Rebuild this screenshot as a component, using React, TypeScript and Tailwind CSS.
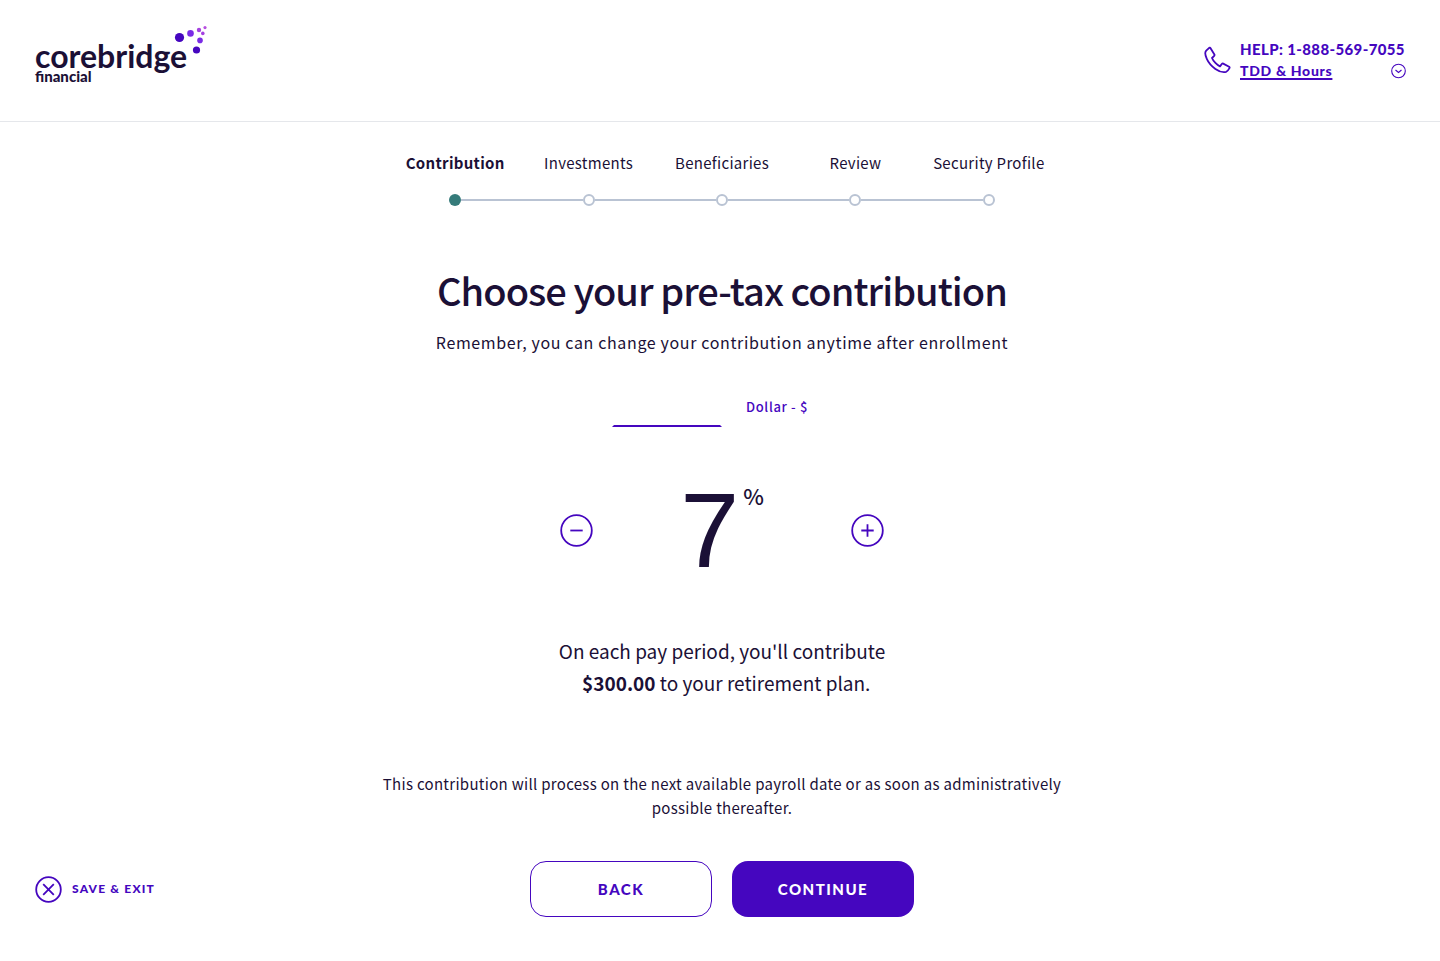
import { useState } from 'react'

const steps = ['Contribution', 'Investments', 'Beneficiaries', 'Review', 'Security Profile']

const Logo = () => (
  <a href="#" aria-label="corebridge financial" className="relative block pt-3.5 font-['Lato'] text-[#1b1036]">
    <span className="block text-[32px] leading-7 font-bold">corebridge</span>
    <span className="block text-[15px] leading-3 font-black">financial</span>
    <svg className="absolute -top-1.5 left-[139px] h-8 w-9" viewBox="0 0 36 32" aria-hidden="true">
      <circle cx="5.5" cy="15.5" r="4.6" fill="#4506bf" />
      <circle cx="16.5" cy="11.4" r="3.3" fill="#7a2be6" />
      <circle cx="25" cy="8" r="2.2" fill="#a441e0" />
      <circle cx="31" cy="5.6" r="1.6" fill="#b84fe0" />
      <circle cx="28.8" cy="11.4" r="1.8" fill="#a441e0" />
      <circle cx="26" cy="18.4" r="2.8" fill="#7a2be6" />
      <circle cx="22.5" cy="28" r="3.6" fill="#4506bf" />
    </svg>
  </a>
)

const PhoneIcon = () => (
  <svg className="h-7 w-7" viewBox="0 0 28 28" fill="none" stroke="currentColor" strokeWidth="1.8" strokeLinejoin="round" aria-hidden="true">
    <path d="M5.2 1.8 2.2 4.6C.9 6 1.1 9.2 2.8 12.8 4.4 16.4 7.4 20 11.4 22.9 15.2 25.6 19.6 26.5 22.1 25.9 23.1 25.6 24.4 24 25.5 22.1 25.8 21.6 25.6 21.2 25.1 20.8L19.2 17.6C18.8 17.4 18.3 17.4 18 17.8L16 20.4C13.2 19.2 9.2 15.2 8 12L10.2 9.8C10.6 9.4 10.6 8.9 10.4 8.4L6.4 2.1C6.1 1.6 5.6 1.5 5.2 1.8Z" />
  </svg>
)

const Header = () => (
  <header className="flex h-[122px] items-start justify-between border-b border-gray-200 pt-7 pr-[34px] pl-[35px]">
    <Logo />
    <div className="flex items-center gap-2 pt-2.5 font-['Lato'] text-[14px] leading-[22px] font-black text-[#4506bf]">
      <PhoneIcon />
      <div className="w-[166px]">
        <a href="tel:18885697055" className="block text-[15px] tracking-wide whitespace-nowrap">HELP: 1-888-569-7055</a>
        <button type="button" className="flex w-full items-center justify-between">
          <span className="tracking-wider underline decoration-2 underline-offset-2">TDD &amp; Hours</span>
          <svg className="h-4 w-4" viewBox="0 0 16 16" fill="none" stroke="currentColor" aria-hidden="true">
            <circle cx="8.5" cy="8" r="6.8" strokeWidth="1.1" />
            <path d="M5.5 7l3 2.4 3-2.4" strokeWidth="1.2" />
          </svg>
        </button>
      </div>
    </div>
  </header>
)

const Progress = () => (
  <ol className="flex w-full max-w-[667px] text-[15px] leading-6 tracking-[0.02em]">
    {steps.map((step, index) => (
      <li key={step} aria-current={index === 0 ? 'step' : undefined} className="flex-1 text-center">
        <span className={index === 0 ? 'font-bold whitespace-nowrap' : 'whitespace-nowrap'}>{step}</span>
        <div className="mt-[19px] flex items-center">
          <span className={index === 0 ? 'h-0.5 flex-1' : 'h-0.5 flex-1 bg-[#b9c3d3]'} />
          <span
            className={
              index === 0
                ? 'h-3 w-3 rounded-full bg-[#357b7a]'
                : 'h-3 w-3 rounded-full border-2 border-[#b9c3d3] bg-white'
            }
          />
          <span className={index === steps.length - 1 ? 'h-0.5 flex-1' : 'h-0.5 flex-1 bg-[#b9c3d3]'} />
        </div>
      </li>
    ))}
  </ol>
)

const App = () => {
  const [percent, setPercent] = useState(7)

  return (
    <div className="bg-white font-['Noto_Sans_CJK_SC',sans-serif] text-[#1b1036]">
      <Header />

      <main className="flex flex-col items-center pt-[29px] pr-8 pl-9 text-center">
        <Progress />

        <h1 className="mt-[60px] text-[38px] leading-12 font-medium tracking-tight">Choose your pre-tax contribution</h1>
        <p className="mt-4 text-[16px] leading-6 tracking-[0.04em]">
          Remember, you can change your contribution anytime after enrollment
        </p>

        <div role="tablist" className="mt-[33px] flex text-[13px] font-medium tracking-wider text-[#4506bf]">
          <button
            type="button"
            role="tab"
            aria-selected="true"
            aria-label="Percent"
            className="flex h-10 w-[110px] items-end"
          >
            <svg className="h-0.5 w-full" viewBox="0 0 110 2" preserveAspectRatio="none" aria-hidden="true">
              <path d="M2 0h106l2 2H0z" fill="currentColor" />
            </svg>
          </button>
          <button type="button" role="tab" aria-selected="false" className="h-10 w-[110px]">
            Dollar - $
          </button>
        </div>

        <div className="mt-12 flex w-[324px] items-center justify-between">
          <button
            type="button"
            aria-label="Decrease contribution"
            onClick={() => setPercent(Math.max(0, percent - 1))}
            className="text-[#4506bf]"
          >
            <svg className="h-[33px] w-[33px]" viewBox="0 0 33 33" fill="none" stroke="currentColor" strokeWidth="1.8" aria-hidden="true">
              <circle cx="16.5" cy="16.5" r="15.3" />
              <path d="M10.3 16.5h12.4" />
            </svg>
          </button>
          <div className="flex items-start gap-1">
            <span className="font-['Liberation_Sans'] text-[106px] leading-[110px]">{percent}</span>
            <span className="pt-2 text-[22px] leading-6 font-medium">%</span>
          </div>
          <button
            type="button"
            aria-label="Increase contribution"
            onClick={() => setPercent(Math.min(100, percent + 1))}
            className="text-[#4506bf]"
          >
            <svg className="h-[33px] w-[33px]" viewBox="0 0 33 33" fill="none" stroke="currentColor" strokeWidth="1.8" aria-hidden="true">
              <circle cx="16.5" cy="16.5" r="15.3" />
              <path d="M10.3 16.5h12.4M16.5 10.3v12.4" />
            </svg>
          </button>
        </div>

        <p className="mt-[50px] text-[19px] leading-8">
          On each pay period, you'll contribute
          <br />
          &nbsp;&nbsp;<strong className="font-bold">$300.00</strong> to your retirement plan.
        </p>

        <p className="mt-[73px] max-w-[700px] text-[15px] leading-6 tracking-[0.02em]">
          This contribution will process on the next available payroll date or as soon as administratively possible
          thereafter.
        </p>
      </main>

      <footer className="mt-[41px] grid grid-cols-[1fr_auto_1fr] items-center pr-[31px] pb-11 pl-[35px] font-['Lato'] font-black text-[#4506bf]">
        <button type="button" className="flex items-center gap-2.5 text-[12px] tracking-widest">
          <svg className="h-[27px] w-[27px]" viewBox="0 0 27 27" fill="none" stroke="currentColor" strokeWidth="1.8" aria-hidden="true">
            <circle cx="13.5" cy="13.5" r="12.3" />
            <path d="M8.2 8.2l10.6 10.6M18.8 8.2L8.2 18.8" />
          </svg>
          SAVE &amp; EXIT
        </button>
        <div className="flex gap-5 text-[15px] tracking-widest">
          <button type="button" className="h-14 w-[182px] rounded-2xl border border-[#4506bf]">
            BACK
          </button>
          <button type="button" className="h-14 w-[182px] rounded-2xl bg-[#4506bf] text-white">
            CONTINUE
          </button>
        </div>
      </footer>
    </div>
  )
}

export default App
